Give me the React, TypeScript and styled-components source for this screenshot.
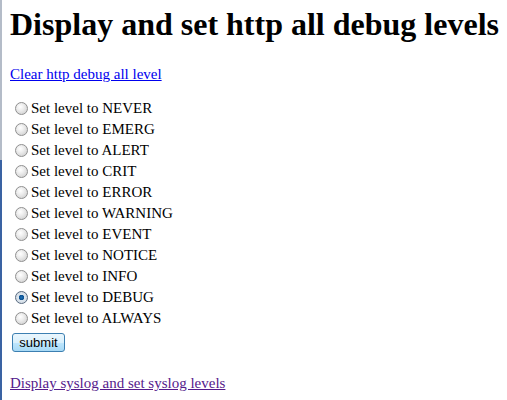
import React from "react";
import styled, { createGlobalStyle } from "styled-components";

const Global = createGlobalStyle`
  html, body { margin: 0; padding: 0; background: #ffffff; }
  body { font-family: "Liberation Serif", "Times New Roman", serif; font-size: 15px; color: #000; }
`;

const Frame = styled.div`
  min-height: 400px;
  box-sizing: border-box;
  border-left: 2px solid transparent;
  border-image: linear-gradient(to bottom, #b4bcc8 0, #b4bcc8 160px, #3a63a3 160px, #3a63a3 100%) 1;
  padding: 6px 8px 0 8px;
`;

const Title = styled.h1`
  margin: 0;
  font-size: 32px;
  line-height: 36px;
  font-weight: bold;
  white-space: nowrap;
`;

const LinkLine = styled.p`
  margin: 23px 0 0 0;
  line-height: 18px;
`;

const Link = styled.a<{ $visited?: boolean }>`
  color: ${(p) => (p.$visited ? "#551a8b" : "#0000ee")};
  text-decoration: underline;
`;

const Form = styled.form`
  margin: 15px 0 0 0;
  display: flex;
  flex-direction: column;
`;

const Row = styled.label`
  display: flex;
  align-items: center;
  height: 21px;
`;

const Radio = styled.input`
  appearance: none;
  -webkit-appearance: none;
  box-sizing: border-box;
  width: 13px;
  height: 13px;
  margin: 0 3px 0 5px;
  border-radius: 50%;
  border: 1px solid #8f8f8f;
  background: radial-gradient(circle at 40% 35%, #ffffff 0%, #eeeeee 35%, #c8c8c8 100%);
  &:checked {
    border-color: #5a6b80;
    background: radial-gradient(circle at 50% 50%, #1d6fb5 0, #0b4f8f 2.5px, #dde6ee 3px, #c9d3dc 100%);
  }
`;

const Submit = styled.button`
  margin: 4px 0 0 2px;
  align-self: flex-start;
  width: 53px;
  height: 19px;
  padding: 0;
  box-sizing: border-box;
  border: 1px solid #3c7fb1;
  border-radius: 3px;
  background: linear-gradient(to bottom, #eaf6fd 0%, #d9f0fc 50%, #bee6fd 51%, #a7d9f5 100%);
  font-family: "Liberation Sans", Arial, sans-serif;
  font-size: 13px;
  color: #000;
  line-height: 15px;
`;

const BottomLine = styled.p`
  margin: 22px 0 0 0;
  line-height: 18px;
`;

const levels = ["NEVER", "EMERG", "ALERT", "CRIT", "ERROR", "WARNING", "EVENT", "NOTICE", "INFO", "DEBUG", "ALWAYS"];

export default function App() {
  return (
    <>
      <Global />
      <Frame>
        <Title>Display and set http all debug levels</Title>
        <LinkLine>
          <Link href="#">Clear http debug all level</Link>
        </LinkLine>
        <Form onSubmit={(e) => e.preventDefault()}>
          {levels.map((l) => (
            <Row key={l}>
              <Radio type="radio" name="level" value={l} defaultChecked={l === "DEBUG"} />
              Set level to {l}
            </Row>
          ))}
          <Submit type="submit">submit</Submit>
        </Form>
        <BottomLine>
          <Link href="#" $visited>Display syslog and set syslog levels</Link>
        </BottomLine>
      </Frame>
    </>
  );
}
